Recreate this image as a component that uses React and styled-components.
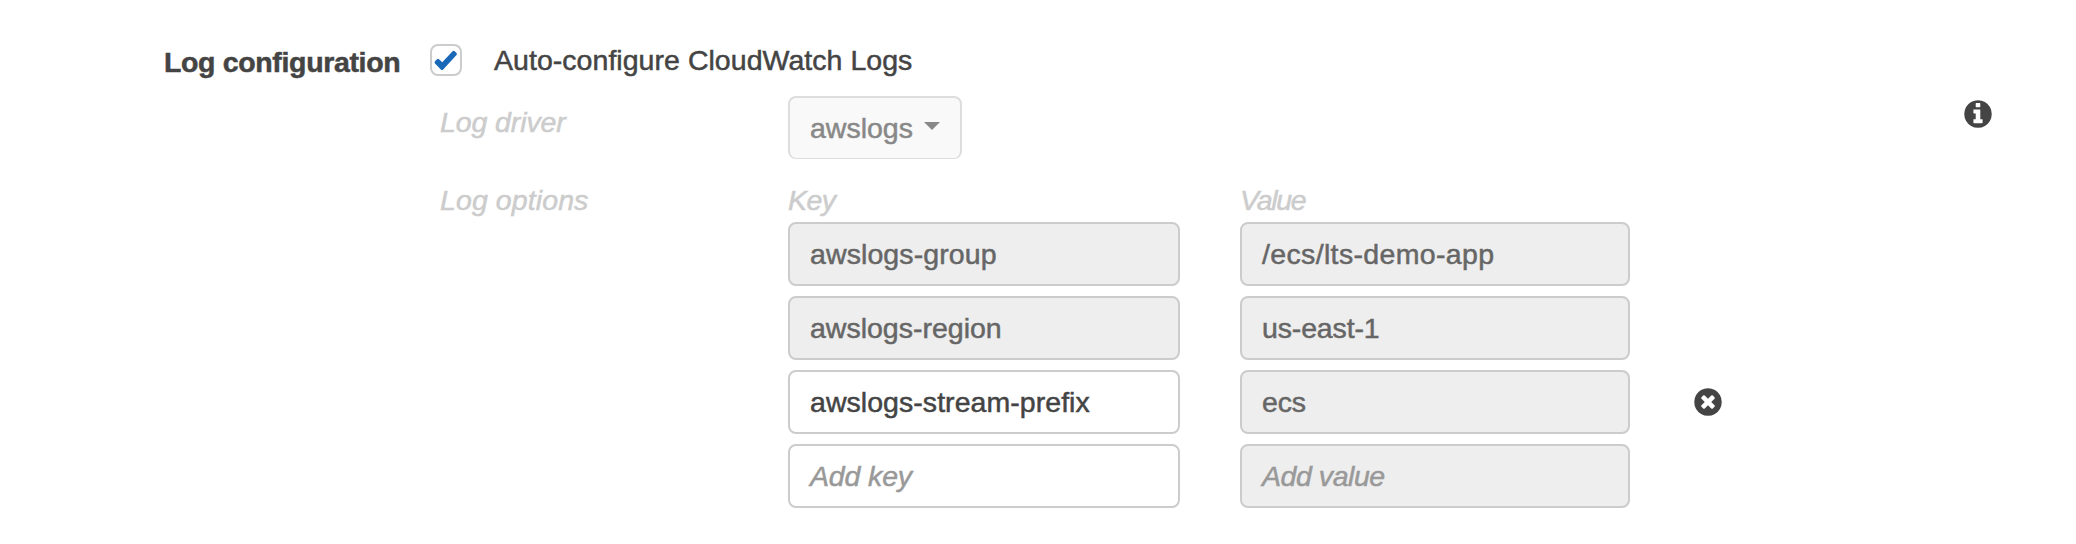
import React from "react";
import styled, { createGlobalStyle } from "styled-components";

const GlobalStyle = createGlobalStyle`
  * { box-sizing: border-box; }
  body {
    margin: 0;
    background: #fff;
    color: #444;
    font: 28.5px/31px "Liberation Sans", Arial, sans-serif;
    -webkit-text-stroke: 0.5px currentColor;
  }
`;

const Page = styled.main`
  display: flex;
  height: 544px;
  padding: 44px 84px 0 164px;
`;

const SectionLabel = styled.div`
  flex: none;
  width: 266px;
  padding-top: 3px;
  font-weight: bold;
  letter-spacing: -0.35px;
  white-space: nowrap;
`;

const Settings = styled.div`
  flex: 1;
`;

const CheckRow = styled.label`
  display: flex;
  align-items: flex-start;
  gap: 32px;
  height: 52px;
`;

const Checkbox = styled.span`
  display: flex;
  align-items: center;
  justify-content: center;
  width: 32px;
  height: 32px;
  border: 2px solid #ccc;
  border-radius: 8px;
  color: #1a69b9;
`;

const CheckText = styled.span`
  padding-top: 1px;
  letter-spacing: 0.04px;
`;

const SettingRow = styled.div`
  display: flex;
  align-items: flex-start;
`;

const DriverRow = styled(SettingRow)`
  height: 89px;
`;

const Caption = styled.div`
  color: #ccc;
  font-style: italic;
  letter-spacing: ${(p) => p.$tracking ?? 0}px;
`;

const RowCaption = styled(Caption)`
  flex: none;
  width: 358px;
  padding: ${(p) => p.$drop ?? 0}px 0 0 10px;
`;

const DriverSelect = styled.button`
  display: flex;
  align-items: flex-start;
  width: 174px;
  height: 63px;
  padding: 15px 0 0 20px;
  border: 2px solid #ddd;
  border-bottom-width: 1px;
  border-radius: 8px;
  background: #f9f9f9;
  color: #888;
  font: inherit;
  -webkit-text-stroke: inherit;
`;

const Caret = styled.svg`
  margin: 9px 0 0 11px;
`;

const InfoSlot = styled.div`
  margin: 4px 0 0 auto;
`;

const Column = styled.div`
  display: flex;
  flex-direction: column;
  gap: 10px;
  width: ${(p) => p.$width}px;
  margin-right: ${(p) => p.$after}px;
`;

const ColumnCaption = styled(Caption)`
  margin-bottom: -4px;
`;

const Field = styled.div`
  height: 64px;
  padding: 15px 20px 0;
  border: 2px solid #ccc;
  border-radius: 8px;
  background: ${(p) => (p.$locked ? "#eee" : "#fff")};
  color: ${(p) => (p.$hint ? "#999" : p.$locked ? "#666" : "#444")};
  font-style: ${(p) => (p.$hint ? "italic" : "normal")};
  letter-spacing: ${(p) => p.$tracking ?? 0}px;
  white-space: nowrap;
`;

const RemoveSlot = styled.div`
  padding-top: 203px;
`;

const Glyph = styled.svg`
  display: block;
  fill: currentColor;
  overflow: visible;
`;

const DISC =
  "M1664 896q0 209-103 385.5t-279.5 279.5-385.5 103-385.5-103-279.5-279.5-103-385.5 103-385.5 279.5-279.5 385.5-103 385.5 103 279.5 279.5 103 385.5z";
const CROSS =
  "M1277 1122q0-26-19-45l-181-181 181-181q19-19 19-45 0-27-19-46l-90-90q-19-19-46-19-26 0-45 19l-181 181-181-181q-19-19-45-19-27 0-46 19l-90 90q-19 19-19 46 0 26 19 45l181 181-181 181q-19 19-19 45 0 27 19 46l90 90q19 19 46 19 26 0 45-19l181-181 181 181q19 19 45 19 27 0 46-19l90-90q19-19 19-46z";
const INFO =
  "M1152 1376v-160q0-14-9-23t-23-9h-96v-512q0-14-9-23t-23-9h-320q-14 0-23 9t-9 23v160q0 14 9 23t23 9h96v320h-96q-14 0-23 9t-9 23v160q0 14 9 23t23 9h448q14 0 23-9t9-23zM1024 480v-160q0-14-9-23t-23-9h-192q-14 0-23 9t-9 23v160q0 14 9 23t23 9h192q14 0 23-9t9-23z";

const DiscIcon = ({ mark }) => (
  <Glyph width="28" height="28" viewBox="114 114 1564 1564" aria-hidden="true">
    <path fillRule="evenodd" d={DISC + mark} />
  </Glyph>
);

const CheckIcon = () => (
  <Glyph width="24" height="22" viewBox="0 0 24 22" aria-hidden="true">
    <path d="M1 12.2 3 10.2Q4 9.4 5 10.2L8.2 13.2 18.6 2.3Q19.7 1.3 20.7 2.3L22.5 4.1Q23.4 5.1 22.5 6.1L9.2 20.5Q8 21.6 6.8 20.5L1 14.4Q0 13.3 1 12.2Z" />
  </Glyph>
);

const keys = [
  { text: "awslogs-group", locked: true, tracking: 0.1 },
  { text: "awslogs-region", locked: true },
  { text: "awslogs-stream-prefix", tracking: 0.05 },
  { text: "Add key", hint: true, tracking: -0.15 },
];

const values = [
  { text: "/ecs/lts-demo-app", locked: true, tracking: 0.35 },
  { text: "us-east-1", locked: true, tracking: -0.15 },
  { text: "ecs", locked: true, tracking: -0.2 },
  { text: "Add value", locked: true, hint: true, tracking: -0.45 },
];

const OptionColumn = ({ title, tracking, fields, width, after }) => (
  <Column $width={width} $after={after}>
    <ColumnCaption $tracking={tracking}>{title}</ColumnCaption>
    {fields.map((f) => (
      <Field key={f.text} $locked={f.locked} $hint={f.hint} $tracking={f.tracking}>
        {f.text}
      </Field>
    ))}
  </Column>
);

export default function App() {
  return (
    <>
      <GlobalStyle />
      <Page>
        <SectionLabel>Log configuration</SectionLabel>
        <Settings>
          <CheckRow>
            <Checkbox role="checkbox" aria-checked="true">
              <CheckIcon />
            </Checkbox>
            <CheckText>Auto-configure CloudWatch Logs</CheckText>
          </CheckRow>
          <DriverRow>
            <RowCaption $drop={11} $tracking={-0.1}>Log driver</RowCaption>
            <DriverSelect>
              awslogs
              <Caret width="16" height="8" viewBox="0 0 16 8" fill="#888">
                <path d="M0 0H16L8 8Z" />
              </Caret>
            </DriverSelect>
            <InfoSlot>
              <DiscIcon mark={INFO} />
            </InfoSlot>
          </DriverRow>
          <SettingRow>
            <RowCaption $tracking={0.1}>Log options</RowCaption>
            <OptionColumn title="Key" tracking={-0.5} fields={keys} width={392} after={60} />
            <OptionColumn title="Value" tracking={-1.3} fields={values} width={390} after={64} />
            <RemoveSlot>
              <DiscIcon mark={CROSS} />
            </RemoveSlot>
          </SettingRow>
        </Settings>
      </Page>
    </>
  );
}
